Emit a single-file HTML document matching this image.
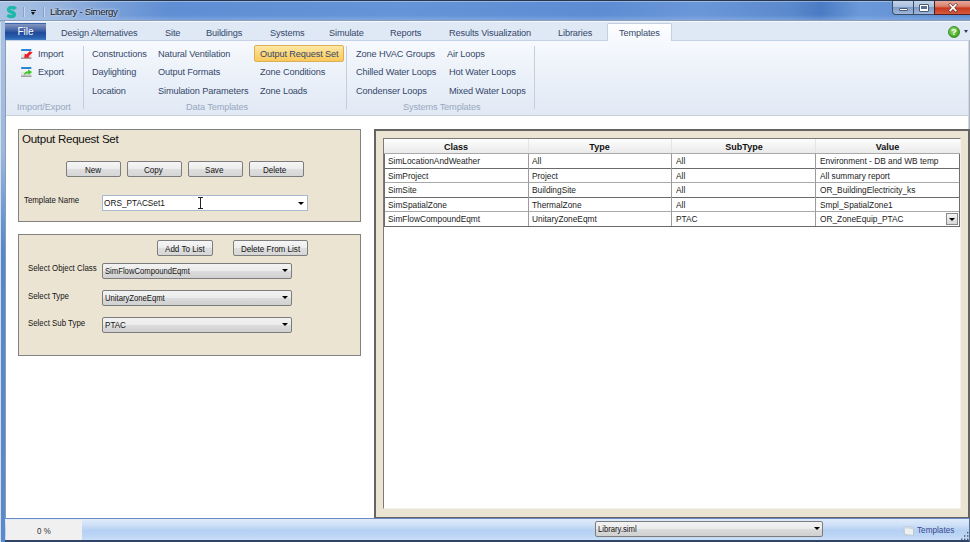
<!DOCTYPE html>
<html><head><meta charset="utf-8">
<style>
*{margin:0;padding:0;box-sizing:border-box}
html,body{width:970px;height:542px;overflow:hidden;background:#fff;font-family:"Liberation Sans",sans-serif}
.a{position:absolute}
#title{left:0;top:0;width:970px;height:22px;background:linear-gradient(90deg,#a9c2e3 0px,#9bb7df 50px,#7aa0d8 110px,#5f8ed4 170px,#6594d8 400px,#5d8cd3 600px,#6a97d8 700px,#5b89cd 790px,#4b7bc4 820px,#6a98d8 860px,#5d8bd0 970px)}
#title .topline{left:0;top:0;width:970px;height:1px;background:#26364d}
#tabs{left:5px;top:21px;width:965px;height:20px;background:#dfe8f5;border-top:1px solid #f4f8fd}
#ribbon{left:5px;top:40px;width:965px;height:76px;background:linear-gradient(#f7f9fd,#eef3fa 35%,#e1e9f5);border-top:1px solid #c3d2e6;border-bottom:1px solid #c6ced8}
#lframe{left:0;top:22px;width:5px;height:520px;background:linear-gradient(#a9c3e5 0,#9cb8e0 130px,#6e9ad6 190px,#5686cc 230px,#5a89ce 100%)}
#lframe2{left:5px;top:40px;width:1px;height:502px;background:#8f9db0}
#lframe0{left:0;top:22px;width:1px;height:520px;background:#d5dde8}
.rt{font-size:9.2px;color:#34476a;white-space:nowrap;letter-spacing:-0.12px}
.gl{font-size:9.2px;color:#98a8be;white-space:nowrap;letter-spacing:-0.12px}
.sep{width:1px;background:#c3cfdd}
.panel{background:#ece4d3;border:1px solid #828282}
.btn{background:linear-gradient(#f6f6f6,#ececec 50%,#dedede 51%,#d6d6d6);border:1px solid #7d7d7d;border-radius:2px;color:#111;text-align:center}
.sx{display:inline-block;transform-origin:0 50%;white-space:nowrap}
.lbl{font-size:9.6px;color:#141414;white-space:nowrap}
.combo{background:#fff;border:1px solid #a9bad0}
.dd{background:linear-gradient(#f2f2f2,#ebebeb 50%,#dcdcdc 51%,#d0d0d0);border:1px solid #7c7c7c;border-radius:2px}
.arrow{width:0;height:0;border-left:3px solid transparent;border-right:3px solid transparent;border-top:3.5px solid #000}
#status{left:5px;top:518px;width:965px;height:24px;background:linear-gradient(#dfebfa 0,#cfe0f7 25%,#b5d0f3 50%,#bdd6f5 75%,#d2e3f8 100%);border-top:1px solid #6a8cc0}
.gh{font-size:9px;font-weight:bold;color:#111;text-align:center}
.gc{font-size:9.6px;color:#1c1c1c;white-space:nowrap}
.hl{height:1px;background:#6b6b6b}
.hl2{height:1px;background:#a9a9a9}
.vl{width:1px;background:#9c9c9c}
</style></head><body>
<div class="a" id="title"><div class="a topline"></div></div>
<div class="a" style="left:0;top:1px;width:970px;height:1px;background:rgba(255,255,255,0.35)"></div>
<div class="a" style="left:0;top:15px;width:970px;height:5px;background:linear-gradient(rgba(170,200,240,0),rgba(170,200,240,0.35))"></div>
<div class="a" style="left:0;top:20px;width:970px;height:1px;background:#8a9cb6"></div>
<div class="a" id="tabs"></div>
<div class="a" id="ribbon"></div>
<div class="a" id="lframe"></div>
<div class="a" id="lframe2"></div>
<div class="a" id="lframe0"></div>

<!-- title elements -->
<svg class="a" style="left:6px;top:6px" width="12" height="13"><path d="M9.6 2.9 C8.9 1.9 7.6 1.5 6.0 1.5 C3.7 1.5 2.5 2.5 2.6 3.9 C2.8 5.6 5.0 5.9 6.6 6.5 C7.9 7 8.5 7.6 8.3 8.8 C8.1 10.1 6.8 10.6 5.2 10.6 C3.6 10.6 2.4 10.0 1.6 9.0" fill="none" stroke="#1db8a8" stroke-width="3.5"/></svg>
<div class="a" style="left:24px;top:7px;width:1px;height:10px;background:#c9d6ea;box-shadow:-1px 0 0 rgba(110,135,175,0.5)"></div>
<div class="a" style="left:31px;top:10px;width:5px;height:1px;background:#111"></div>
<div class="a" style="left:31px;top:12px;width:0;height:0;border-left:2.5px solid transparent;border-right:2.5px solid transparent;border-top:3px solid #111"></div>
<div class="a" style="left:44px;top:7px;width:1px;height:10px;background:#c9d6ea;box-shadow:-1px 0 0 rgba(110,135,175,0.5)"></div>
<div class="a" style="left:50px;top:6px;font-size:9.6px;color:#1a1a1a;letter-spacing:-0.32px;text-shadow:0 0 4px rgba(220,235,255,0.9),0 0 2px rgba(220,235,255,0.9)">Library - Simergy</div>

<!-- caption buttons -->
<div class="a" style="left:892px;top:1px;width:43px;height:14px;border:1px solid #3a4c66;border-top:none;border-radius:0 0 0 4px;background:linear-gradient(#c4d4ea,#a8bfdf 45%,#7f9cc8 50%,#9fb7db)"></div>
<div class="a" style="left:913px;top:1px;width:1px;height:14px;background:#3a4c66"></div>
<div class="a" style="left:899px;top:8px;width:9px;height:3px;background:#fff;border:1px solid #4a5a70;border-radius:1px"></div>
<div class="a" style="left:919px;top:4px;width:10px;height:8px;background:#fff;border:1px solid #4a5a70;border-radius:1px"></div>
<div class="a" style="left:921px;top:6px;width:6px;height:3px;background:#5a7096"></div>
<div class="a" style="left:934px;top:1px;width:36px;height:14px;border-bottom:1px solid #5a2020;border-left:1px solid #3a2020;background:linear-gradient(#e8a89a,#d9826f 40%,#c8391f 55%,#d65b3e)"></div>
<svg class="a" style="left:946px;top:2px" width="14" height="12"><path d="M4.2 2.8 L9.8 8.6 M9.8 2.8 L4.2 8.6" stroke="#6a3030" stroke-width="3" stroke-linecap="square"/><path d="M4.2 2.8 L9.8 8.6 M9.8 2.8 L4.2 8.6" stroke="#fff" stroke-width="1.7" stroke-linecap="square"/></svg>

<!-- File tab -->
<div class="a" style="left:5px;top:23px;width:41px;height:17px;background:linear-gradient(#8597c0,#5470ac 30%,#1f4a98 55%,#2a62b0 85%,#3d7cc6);border-top:1px solid #3e66ad;color:#fff;font-size:10px;text-align:center;line-height:15px">File</div>

<!-- ribbon tabs text -->
<div class="a rt" style="left:61px;top:27.5px">Design Alternatives</div>
<div class="a rt" style="left:165px;top:27.5px">Site</div>
<div class="a rt" style="left:206px;top:27.5px">Buildings</div>
<div class="a rt" style="left:270px;top:27.5px">Systems</div>
<div class="a rt" style="left:329px;top:27.5px">Simulate</div>
<div class="a rt" style="left:390px;top:27.5px">Reports</div>
<div class="a rt" style="left:449px;top:27.5px">Results Visualization</div>
<div class="a rt" style="left:558px;top:27.5px">Libraries</div>
<div class="a" style="left:607px;top:23px;width:65px;height:18px;background:linear-gradient(#fdfeff,#f5f9fd);border:1px solid #c4d0e0;border-bottom:none;border-radius:2px 2px 0 0"></div>
<div class="a rt" style="left:619px;top:27.5px">Templates</div>

<!-- help -->
<div class="a" style="left:948px;top:26px;width:12px;height:12px;border-radius:50%;background:radial-gradient(circle at 40% 35%,#a5e07a,#4fb52e 55%,#2e8a1e);border:1px solid #3d8a2a;color:#fff;font-size:9px;font-weight:bold;text-align:center;line-height:11px">?</div>
<div class="a" style="left:964px;top:30px;width:0;height:0;border-left:2.5px solid transparent;border-right:2.5px solid transparent;border-top:3px solid #2a3f66"></div>

<!-- ribbon content -->
<!-- import icon -->
<svg class="a" style="left:20px;top:48px" width="14" height="12"><rect x="1" y="1" width="10.5" height="9.5" fill="#f2f2f2"/><rect x="1" y="6" width="10.5" height="4" fill="#e2e2e2"/><rect x="1" y="1" width="10.5" height="2" rx="0.8" fill="#2a84d8"/><rect x="1" y="9.6" width="10.5" height="1.2" fill="#8c8c8c"/><path d="M4.2 10 L4.8 5.4 L6.4 6.6 L9.6 3.2 L12.6 4.4 L8.6 8.2 L9.8 9.4 Z" fill="#ea1c24"/></svg>
<!-- export icon -->
<svg class="a" style="left:20px;top:66px" width="14" height="12"><rect x="1" y="1" width="10.5" height="9.5" fill="#f2f2f2"/><rect x="1" y="6" width="10.5" height="4" fill="#e2e2e2"/><rect x="1" y="1" width="10.5" height="2" rx="0.8" fill="#2a84d8"/><rect x="1" y="9.6" width="10.5" height="1.2" fill="#8c8c8c"/><path d="M3.8 9.4 C4 6.6 5.8 5.4 8.2 5.2 L8 3.2 L12 6 L8.6 9 L8.4 7.4 C6.6 7.4 5.2 8 3.8 9.4 Z" fill="#3ec82c"/></svg>
<div class="a rt" style="left:38px;top:48.7px">Import</div>
<div class="a rt" style="left:38px;top:66.7px">Export</div>
<div class="a gl" style="left:17px;top:102px">Import/Export</div>
<div class="a sep" style="left:83px;top:46px;height:63px"></div>

<div class="a rt" style="left:92px;top:48.7px">Constructions</div>
<div class="a rt" style="left:92px;top:66.7px">Daylighting</div>
<div class="a rt" style="left:92px;top:85.7px">Location</div>
<div class="a rt" style="left:158px;top:48.7px">Natural Ventilation</div>
<div class="a rt" style="left:158px;top:66.7px">Output Formats</div>
<div class="a rt" style="left:158px;top:85.7px">Simulation Parameters</div>
<div class="a" style="left:254px;top:45px;width:90px;height:17px;background:linear-gradient(#fde9a8,#fcd77a 50%,#fbc95c);border:1px solid #dcae55;border-radius:2px"></div>
<div class="a rt" style="left:260px;top:48.7px">Output Request Set</div>
<div class="a rt" style="left:260px;top:66.7px">Zone Conditions</div>
<div class="a rt" style="left:260px;top:85.7px">Zone Loads</div>
<div class="a gl" style="left:186px;top:102px">Data Templates</div>
<div class="a sep" style="left:346px;top:46px;height:63px"></div>

<div class="a rt" style="left:356px;top:48.7px">Zone HVAC Groups</div>
<div class="a rt" style="left:356px;top:66.7px">Chilled Water Loops</div>
<div class="a rt" style="left:356px;top:85.7px">Condenser Loops</div>
<div class="a rt" style="left:447px;top:48.7px">Air Loops</div>
<div class="a rt" style="left:449px;top:66.7px">Hot Water Loops</div>
<div class="a rt" style="left:449px;top:85.7px">Mixed Water Loops</div>
<div class="a gl" style="left:403px;top:102px">Systems Templates</div>
<div class="a sep" style="left:534px;top:46px;height:63px"></div>

<!-- left panel 1 -->
<div class="a panel" style="left:18px;top:129px;width:343px;height:93px"></div>
<div class="a" style="left:22px;top:131.5px;font-size:11.6px;color:#111;letter-spacing:-0.3px">Output Request Set</div>
<div class="a btn" style="left:66px;top:161px;width:55px;height:16px"></div>
<div class="a btn" style="left:127px;top:161px;width:55px;height:16px"></div>
<div class="a btn" style="left:188px;top:161px;width:55px;height:16px"></div>
<div class="a btn" style="left:249px;top:161px;width:55px;height:16px"></div>
<div class="a lbl" style="left:85px;top:164px"><span class="sx" style="transform:scaleX(0.84)">New</span></div>
<div class="a lbl" style="left:144px;top:164px"><span class="sx" style="transform:scaleX(0.84)">Copy</span></div>
<div class="a lbl" style="left:205px;top:164px"><span class="sx" style="transform:scaleX(0.84)">Save</span></div>
<div class="a lbl" style="left:263px;top:164px"><span class="sx" style="transform:scaleX(0.84)">Delete</span></div>
<div class="a lbl" style="left:24px;top:194px"><span class="sx" style="transform:scaleX(0.82)">Template Name</span></div>
<div class="a combo" style="left:102px;top:195px;width:206px;height:16px"></div>
<div class="a lbl" style="left:104px;top:197px"><span class="sx" style="transform:scaleX(0.86)">ORS_PTACSet1</span></div>
<div class="a arrow" style="left:298px;top:202px"></div>
<!-- I-beam -->
<div class="a" style="left:200px;top:197px;width:1px;height:12px;background:#222"></div>
<div class="a" style="left:198px;top:197px;width:5px;height:1px;background:#222"></div>
<div class="a" style="left:198px;top:208px;width:5px;height:1px;background:#222"></div>

<!-- left panel 2 -->
<div class="a panel" style="left:18px;top:234px;width:343px;height:122px"></div>
<div class="a btn" style="left:157px;top:240px;width:56px;height:16px"></div>
<div class="a btn" style="left:233px;top:240px;width:75px;height:16px"></div>
<div class="a lbl" style="left:165px;top:243px"><span class="sx" style="transform:scaleX(0.84)">Add To List</span></div>
<div class="a lbl" style="left:241px;top:243px"><span class="sx" style="transform:scaleX(0.84)">Delete From List</span></div>
<div class="a lbl" style="left:28px;top:262px"><span class="sx" style="transform:scaleX(0.82)">Select Object Class</span></div>
<div class="a lbl" style="left:28px;top:290px"><span class="sx" style="transform:scaleX(0.82)">Select Type</span></div>
<div class="a lbl" style="left:28px;top:317px"><span class="sx" style="transform:scaleX(0.82)">Select Sub Type</span></div>
<div class="a dd" style="left:102px;top:263px;width:190px;height:16px"></div>
<div class="a dd" style="left:102px;top:290px;width:190px;height:16px"></div>
<div class="a dd" style="left:102px;top:317px;width:190px;height:16px"></div>
<div class="a lbl" style="left:105px;top:265px"><span class="sx" style="transform:scaleX(0.8)">SimFlowCompoundEqmt</span></div>
<div class="a lbl" style="left:105px;top:292px"><span class="sx" style="transform:scaleX(0.8)">UnitaryZoneEqmt</span></div>
<div class="a lbl" style="left:105px;top:319px"><span class="sx" style="transform:scaleX(0.84)">PTAC</span></div>
<div class="a arrow" style="left:282px;top:269px"></div>
<div class="a arrow" style="left:282px;top:296px"></div>
<div class="a arrow" style="left:282px;top:323px"></div>

<!-- right panel -->
<div class="a" style="left:374px;top:129px;width:596px;height:389px;background:#ece4d3;border-top:2px solid #646464;border-left:2px solid #646464;border-bottom:1px solid #646464"></div>
<div class="a" style="left:968px;top:129px;width:2px;height:389px;background:#646464"></div>
<div class="a" style="left:383px;top:138px;width:578px;height:371px;background:#fff;border-top:1px solid #7a7a7a;border-left:1px solid #7a7a7a;border-right:1px solid #f4f2ee;border-bottom:1px solid #f4f2ee"></div>
<!-- grid header -->
<div class="a" style="left:384px;top:139px;width:576px;height:15px;background:linear-gradient(#fdfdfd,#f3f3f3 50%,#e9e9e9)"></div>
<div class="a" style="left:528px;top:139px;width:1px;height:15px;background:#e4e4e4"></div>
<div class="a" style="left:671px;top:139px;width:1px;height:15px;background:#e4e4e4"></div>
<div class="a" style="left:815px;top:139px;width:1px;height:15px;background:#e4e4e4"></div>
<div class="a gh" style="left:384px;top:141.6px;width:144px">Class</div>
<div class="a gh" style="left:528px;top:141.6px;width:143px">Type</div>
<div class="a gh" style="left:671px;top:141.6px;width:146px">SubType</div>
<div class="a gh" style="left:815px;top:141.6px;width:145px">Value</div>
<!-- grid lines -->
<div class="a hl2" style="left:384px;top:153px;width:576px"></div>
<div class="a hl" style="left:384px;top:168px;width:576px"></div>
<div class="a hl2" style="left:384px;top:182px;width:576px"></div>
<div class="a hl" style="left:384px;top:197px;width:576px"></div>
<div class="a hl2" style="left:384px;top:211px;width:576px"></div>
<div class="a hl" style="left:384px;top:226px;width:576px"></div>
<div class="a vl" style="left:384px;top:154px;height:72px;background:#6e6e6e"></div>
<div class="a vl" style="left:528px;top:154px;height:72px"></div>
<div class="a vl" style="left:671px;top:154px;height:72px"></div>
<div class="a vl" style="left:815px;top:154px;height:72px"></div>
<div class="a vl" style="left:959px;top:154px;height:72px;background:#6e6e6e"></div>
<!-- grid cells -->
<div class="a gc" style="left:388px;top:155.3px"><span class="sx" style="transform:scaleX(0.868)">SimLocationAndWeather</span></div>
<div class="a gc" style="left:388px;top:169.5px"><span class="sx" style="transform:scaleX(0.868)">SimProject</span></div>
<div class="a gc" style="left:388px;top:184.3px"><span class="sx" style="transform:scaleX(0.868)">SimSite</span></div>
<div class="a gc" style="left:388px;top:198.7px"><span class="sx" style="transform:scaleX(0.868)">SimSpatialZone</span></div>
<div class="a gc" style="left:388px;top:213.2px"><span class="sx" style="transform:scaleX(0.868)">SimFlowCompoundEqmt</span></div>
<div class="a gc" style="left:532px;top:155.3px"><span class="sx" style="transform:scaleX(0.868)">All</span></div>
<div class="a gc" style="left:532px;top:169.5px"><span class="sx" style="transform:scaleX(0.868)">Project</span></div>
<div class="a gc" style="left:532px;top:184.3px"><span class="sx" style="transform:scaleX(0.868)">BuildingSite</span></div>
<div class="a gc" style="left:532px;top:198.7px"><span class="sx" style="transform:scaleX(0.868)">ThermalZone</span></div>
<div class="a gc" style="left:532px;top:213.2px"><span class="sx" style="transform:scaleX(0.868)">UnitaryZoneEqmt</span></div>
<div class="a gc" style="left:676px;top:155.3px"><span class="sx" style="transform:scaleX(0.868)">All</span></div>
<div class="a gc" style="left:676px;top:169.5px"><span class="sx" style="transform:scaleX(0.868)">All</span></div>
<div class="a gc" style="left:676px;top:184.3px"><span class="sx" style="transform:scaleX(0.868)">All</span></div>
<div class="a gc" style="left:676px;top:198.7px"><span class="sx" style="transform:scaleX(0.868)">All</span></div>
<div class="a gc" style="left:676px;top:213.2px"><span class="sx" style="transform:scaleX(0.868)">PTAC</span></div>
<div class="a gc" style="left:820px;top:155.3px"><span class="sx" style="transform:scaleX(0.868)">Environment - DB and WB temp</span></div>
<div class="a gc" style="left:820px;top:169.5px"><span class="sx" style="transform:scaleX(0.868)">All summary report</span></div>
<div class="a gc" style="left:820px;top:184.3px"><span class="sx" style="transform:scaleX(0.868)">OR_BuildingElectricity_ks</span></div>
<div class="a gc" style="left:820px;top:198.7px"><span class="sx" style="transform:scaleX(0.868)">Smpl_SpatialZone1</span></div>
<div class="a gc" style="left:820px;top:213.2px"><span class="sx" style="transform:scaleX(0.868)">OR_ZoneEquip_PTAC</span></div>
<div class="a" style="left:946px;top:213px;width:12px;height:12px;background:linear-gradient(#f4f4f4,#d8d8d8);border:1px solid #8a8a8a"></div>
<div class="a arrow" style="left:949px;top:218px;border-left-width:3px;border-right-width:3px;border-top-width:3px"></div>

<div class="a" style="left:968px;top:40px;width:2px;height:89px;background:linear-gradient(90deg,#e0e6ee,#9aa4b2)"></div>
<!-- status -->
<div class="a" id="status"></div>
<div class="a" style="left:6px;top:520px;width:76px;height:20px;background:#f0f0f0"></div>
<div class="a" style="left:5px;top:540px;width:965px;height:2px;background:#2f4466"></div>
<div class="a" style="left:969px;top:518px;width:1px;height:24px;background:#5a6f90"></div>
<div class="a" style="left:37px;top:525px;font-size:9.4px;color:#333"><span class="sx" style="transform:scaleX(0.85)">0 %</span></div>
<div class="a dd" style="left:595px;top:521px;width:228px;height:16px"></div>
<div class="a lbl" style="left:598px;top:523px"><span class="sx" style="transform:scaleX(0.8)">Library.siml</span></div>
<div class="a arrow" style="left:814px;top:527px"></div>
<svg class="a" style="left:903px;top:524px" width="12" height="12"><path d="M1 2.5 L10.5 3.5 L10.5 11.5 L1.5 10.5 Z" fill="#eef1f4" stroke="#b8c0c8" stroke-width="0.8"/><path d="M1.2 2.6 L10.4 3.6 L10.4 5.2 L1.3 4.2 Z" fill="#cfd8e0"/></svg>
<div class="a" style="left:917px;top:523.5px;font-size:9.9px;color:#3a4a90"><span class="sx" style="transform:scaleX(0.83)">Templates</span></div>
<svg class="a" style="left:958px;top:530px" width="12" height="12"><g fill="#44546e"><rect x="9" y="2" width="1.4" height="1.4"/><rect x="6" y="5.3" width="1.4" height="1.4"/><rect x="9" y="5.3" width="1.4" height="1.4"/><rect x="3" y="8.5" width="1.4" height="1.4"/><rect x="6" y="8.5" width="1.4" height="1.4"/><rect x="9" y="8.5" width="1.4" height="1.4"/></g></svg>
</body></html>
